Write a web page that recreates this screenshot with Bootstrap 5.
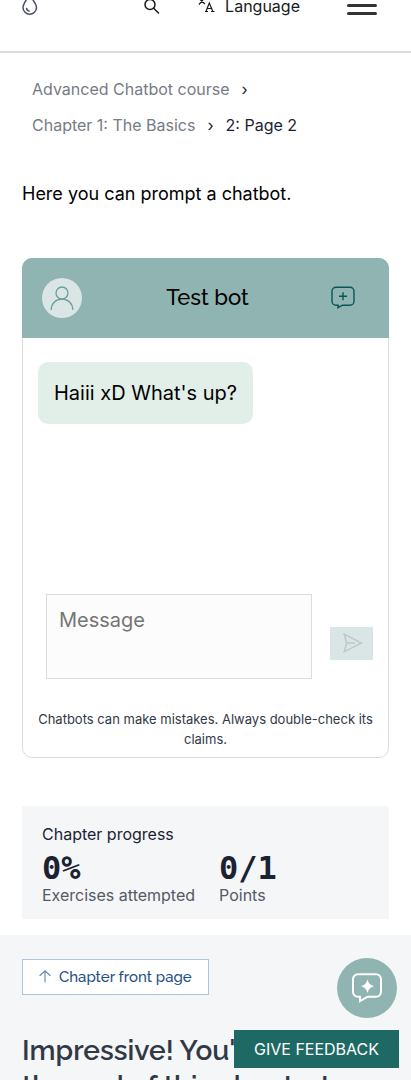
<!DOCTYPE html>
<html lang="en">
<head>
<meta charset="utf-8">
<meta name="viewport" content="width=device-width, initial-scale=1">
<title>2: Page 2 - Advanced Chatbot course</title>
<link href="https://cdn.jsdelivr.net/npm/bootstrap@5.3.0/dist/css/bootstrap.min.css" rel="stylesheet">
<style>
body { font-family: Inter, "Open Sans", sans-serif; color: #000; background: #fff; }
svg { display: block; flex-shrink: 0; }
.screen { height: 100vh; overflow: hidden; }
.display-font { font-family: Raleway, Lato, sans-serif; }
.site-header { height: 92px; margin-top: -39px; padding: 0 34px 0 20px; border-bottom: 2px solid #dcdcdc; }
.plain-btn { border: 0; background: none; padding: 0; color: #1a1a1a; }
.lang-btn { margin-left: 36px; gap: 10px; }
.menu-btn { margin-left: 47px; }
.crumbs { padding: 18px 32px 0; line-height: 36px; }
.crumbs a { color: #767b85; text-decoration: none; }
.crumbs .sep { padding: 0 12px; color: #1a2333; }
.crumbs .current { color: #1a2333; }
.content { padding: 0 22px; }
.intro { margin: 37px 0 50px; font-size: 18px; line-height: 28px; }
.chat { height: 500px; border: 1px solid #dcdcdc; border-radius: 10px; }
.chat-head { height: 80px; margin: -1px -1px 0; padding: 0 32px 0 20px; border-radius: 10px 10px 0 0; background: #90b4b2; }
.avatar { width: 40px; height: 40px; background: #dae6e5; }
.chat-title { font-size: 22px; line-height: 28px; font-weight: 500; padding: 0 0 2px 4px; }
.bubble { margin: 24px 15px 0; padding: 16px; border-radius: 10px; background: #e2efe8; font-size: 20px; line-height: 30px; }
.compose { padding: 0 15px 0 23px; gap: 18px; }
.message-box { height: 85px; min-width: 0; padding: 10px 12px; border: 1px solid #dcdcdc; background: #fcfcfc; font-size: 20px; line-height: 30px; resize: none; }
.message-box::placeholder { color: #757575; }
.send-btn { flex: 0 0 43px; height: 33px; margin-bottom: 19px; border: 0; padding: 0 0 2px 3px; background: #dae6e5; color: #bdc9c8; }
.disclaimer { margin: 30px 10px 8px; font-size: 13px; line-height: 20px; color: #313947; }
.progress-panel { margin-top: 48px; padding: 16px 20px 12px; background: #f5f6f7; color: #1a2333; line-height: 24px; }
.figure-value { font: 700 32px/45px "DejaVu Sans Mono", monospace; margin-bottom: -8px; }
.figure-label { color: #535a66; }
.next-section { margin-top: 16px; padding: 24px 22px; background: #f5f6f8; }
.front-link { height: 36px; padding: 0 16px 0 15px; border: 1px solid #b0c5db; background: #fff; color: #1f5085; font-size: 15px; font-weight: 500; text-decoration: none; gap: 6px; }
.done-title { margin: 38px 0 0; font-size: 28px; line-height: 36px; font-weight: 600; color: #313947; }
.bot-fab { right: 14px; bottom: 62px; width: 60px; height: 60px; border: 0; padding: 0; background: #90b4b2; color: #fff; }
.feedback-btn { right: 12px; bottom: 12px; width: 165px; height: 38px; border: 0; padding: 0; background: #1f6964; color: #fff; font-size: 16px; }
</style>
</head>
<body>
<div class="screen">
  <header class="site-header d-flex align-items-center">
    <a href="#" aria-label="Home">
      <svg width="20" height="24" viewBox="0 0 20 24" fill="none" stroke="#4a5062" stroke-width="1.5" stroke-linecap="round"><path d="M9.500 1C6 6 3 10 3 13.500a6.600 6.600 0 0 0 13.500 0C16.500 10 13 6 9.500 1z"/><path d="M6.500 14.500c.3 1.400 1.200 2.200 2.600 2.600"/></svg>
    </a>
    <button class="plain-btn ms-auto" aria-label="Search">
      <svg width="18" height="18" viewBox="0 0 18 18" fill="none" stroke="currentColor" stroke-width="1.500" stroke-linecap="round"><circle cx="7" cy="7.500" r="5"/><path d="M10.700 11.200L15.500 16"/></svg>
    </button>
    <button class="plain-btn lang-btn d-flex align-items-center">
      <svg width="18" height="18" viewBox="0 0 18 18" fill="none" stroke="currentColor" stroke-width="1.200"><path d="M1 1h8M5 0v1M2 7.500L7.500 1M3 2.500l5 4.500"/><path d="M9 14.200L12.300 6l3.500 8.200M10.300 11.500h4.200M8 14.500h3M14 14.500H17.500"/></svg>
      <span>Language</span>
    </button>
    <button class="plain-btn menu-btn" aria-label="Menu">
      <svg width="30" height="22" viewBox="0 0 30 22" stroke="#333" stroke-width="3" stroke-linecap="round"><path d="M1.500 2.500h27M1.500 10.500h27M1.500 18.500h27"/></svg>
    </button>
  </header>

  <nav class="crumbs" aria-label="Breadcrumb">
    <ol class="list-unstyled d-flex flex-wrap mb-0">
      <li><a href="#">Advanced Chatbot course</a><span class="sep">›</span></li>
      <li><a href="#">Chapter 1: The Basics</a><span class="sep">›</span></li>
      <li class="current">2: Page 2</li>
    </ol>
  </nav>

  <main class="content">
    <p class="intro">Here you can prompt a chatbot.</p>

    <section class="chat d-flex flex-column">
      <div class="chat-head d-flex align-items-center justify-content-between">
        <span class="avatar rounded-circle d-flex align-items-center justify-content-center">
          <svg width="24" height="24" viewBox="0 0 24 24" fill="none" stroke="#6ba09b" stroke-width="1.300" stroke-linecap="round"><circle cx="12" cy="7" r="6"/><path d="M1.200 23.500C1.500 17 6 13.200 12 13.200s10.500 3.800 10.800 10.300"/></svg>
        </span>
        <h2 class="chat-title display-font mb-0">Test bot</h2>
        <button class="plain-btn" aria-label="New chat">
          <svg width="28" height="24" viewBox="0 0 28 24" fill="none" stroke="#065853" stroke-width="1.400"><path d="M7 1.200h14a4 4 0 0 1 4 4v10a4 4 0 0 1-4 4h-7.500L9 21.700l.2-2.500H7a4 4 0 0 1-4-4v-10a4 4 0 0 1 4-4z"/><path d="M14 6.200v8M10 10.200h8"/></svg>
        </button>
      </div>
      <div class="bubble align-self-start">Haiii xD What's up?</div>
      <form class="compose d-flex align-items-end mt-auto">
        <textarea class="message-box flex-grow-1" placeholder="Message" aria-label="Message"></textarea>
        <button type="button" class="send-btn d-flex align-items-center justify-content-center" aria-label="Send" disabled>
          <svg width="20" height="20" viewBox="0 0 20 20" fill="none" stroke="currentColor" stroke-width="1.500"><path d="M1.200 1.200L18.500 10 1.200 18.800 3.700 10zM3.700 10H12"/></svg>
        </button>
      </form>
      <p class="disclaimer text-center">Chatbots can make mistakes. Always double-check its claims.</p>
    </section>

    <section class="progress-panel">
      <div>Chapter progress</div>
      <div class="d-flex gap-4">
        <div><div class="figure-value">0%</div><div class="figure-label">Exercises attempted</div></div>
        <div><div class="figure-value">0/1</div><div class="figure-label">Points</div></div>
      </div>
    </section>
  </main>

  <section class="next-section display-font">
    <a href="#" class="front-link d-inline-flex align-items-center">
      <svg width="15" height="16" viewBox="0 0 15 16" fill="none" stroke="#6188ae" stroke-width="1.100" stroke-linecap="round"><path d="M7 13V2M2 6.500L7 1.800 12 6.500"/></svg>
      <span>Chapter front page</span>
    </a>
    <h2 class="done-title">Impressive! You've reached the end of this chapter!</h2>
  </section>
</div>

<button class="bot-fab position-fixed rounded-circle d-flex align-items-center justify-content-center" aria-label="Open course chatbot">
  <svg width="34" height="32" viewBox="0 0 34 32"><path d="M8 2.200h18a5 5 0 0 1 5 5v12.600a5 5 0 0 1-5 5h-8.500L10 29v-4.200H8a5 5 0 0 1-5-5V7.200a5 5 0 0 1 5-5z" fill="none" stroke="currentColor" stroke-width="2"/><path d="M17.500 7.500Q18.800 13 24 14.200 18.800 15.500 17.500 21 16.200 15.500 11 14.200 16.200 13 17.500 7.500z" fill="currentColor"/></svg>
</button>
<button class="feedback-btn position-fixed">GIVE FEEDBACK</button>
<script src="https://cdn.jsdelivr.net/npm/bootstrap@5.3.0/dist/js/bootstrap.bundle.min.js"></script>
</body>
</html>
